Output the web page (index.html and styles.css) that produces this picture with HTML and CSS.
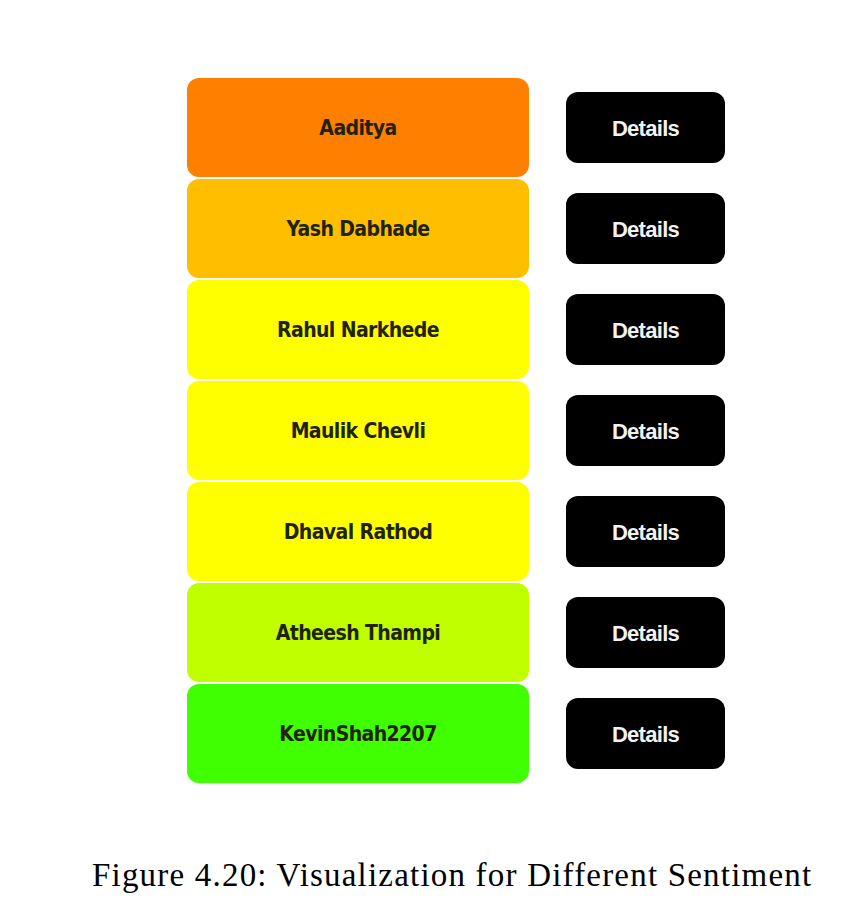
FILE: index.html
```html
<!DOCTYPE html>
<html>
<head>
<meta charset="utf-8">
<link rel="stylesheet" href="styles.css">
</head>
<body>
<div class="page">
  <div class="list">
    <div class="row"><div class="name c1">Aaditya</div><div class="btn">Details</div></div>
    <div class="row"><div class="name c2">Yash Dabhade</div><div class="btn">Details</div></div>
    <div class="row"><div class="name c3">Rahul Narkhede</div><div class="btn">Details</div></div>
    <div class="row"><div class="name c3">Maulik Chevli</div><div class="btn">Details</div></div>
    <div class="row"><div class="name c3">Dhaval Rathod</div><div class="btn">Details</div></div>
    <div class="row"><div class="name c4">Atheesh Thampi</div><div class="btn">Details</div></div>
    <div class="row"><div class="name c5">KevinShah2207</div><div class="btn">Details</div></div>
  </div>
  <div class="caption">Figure 4.20: Visualization for Different Sentiment</div>
</div>
</body>
</html>
```
FILE: styles.css
```css
html, body {
  margin: 0;
  padding: 0;
  background: #ffffff;
}
.page {
  width: 852px;
  height: 905px;
  box-sizing: border-box;
  padding-top: 78px;
}
.list {
  display: flex;
  flex-direction: column;
  gap: 2px;
  padding-left: 187px;
}
.row {
  display: flex;
  align-items: center;
  gap: 37px;
  height: 99px;
}
.name {
  width: 342px;
  height: 99px;
  border-radius: 12px;
  display: flex;
  align-items: center;
  justify-content: center;
  font-family: "DejaVu Sans Condensed", "DejaVu Sans", sans-serif;
  font-stretch: condensed;
  font-weight: bold;
  font-size: 21px;
  color: #222211;
  letter-spacing: -0.6px;
  padding-top: 1px;
  box-sizing: border-box;
}
.c1 { background: #ff8000; }
.c2 { background: #ffbf00; }
.c3 { background: #ffff00; }
.c4 { background: #bfff00; }
.c5 { background: #40ff00; }
.btn {
  width: 159px;
  height: 71px;
  border-radius: 12px;
  background: #000000;
  color: #f2f2f2;
  display: flex;
  align-items: center;
  justify-content: center;
  font-family: "Liberation Sans", Arial, sans-serif;
  font-weight: bold;
  font-size: 22px;
  letter-spacing: -0.7px;
  padding-top: 2px;
  box-sizing: border-box;
}
.caption {
  margin-top: 74px;
  padding-left: 92px;
  font-family: "Liberation Serif", "Times New Roman", serif;
  font-size: 33px;
  letter-spacing: 1.2px;
  color: #000;
  white-space: nowrap;
}
```
